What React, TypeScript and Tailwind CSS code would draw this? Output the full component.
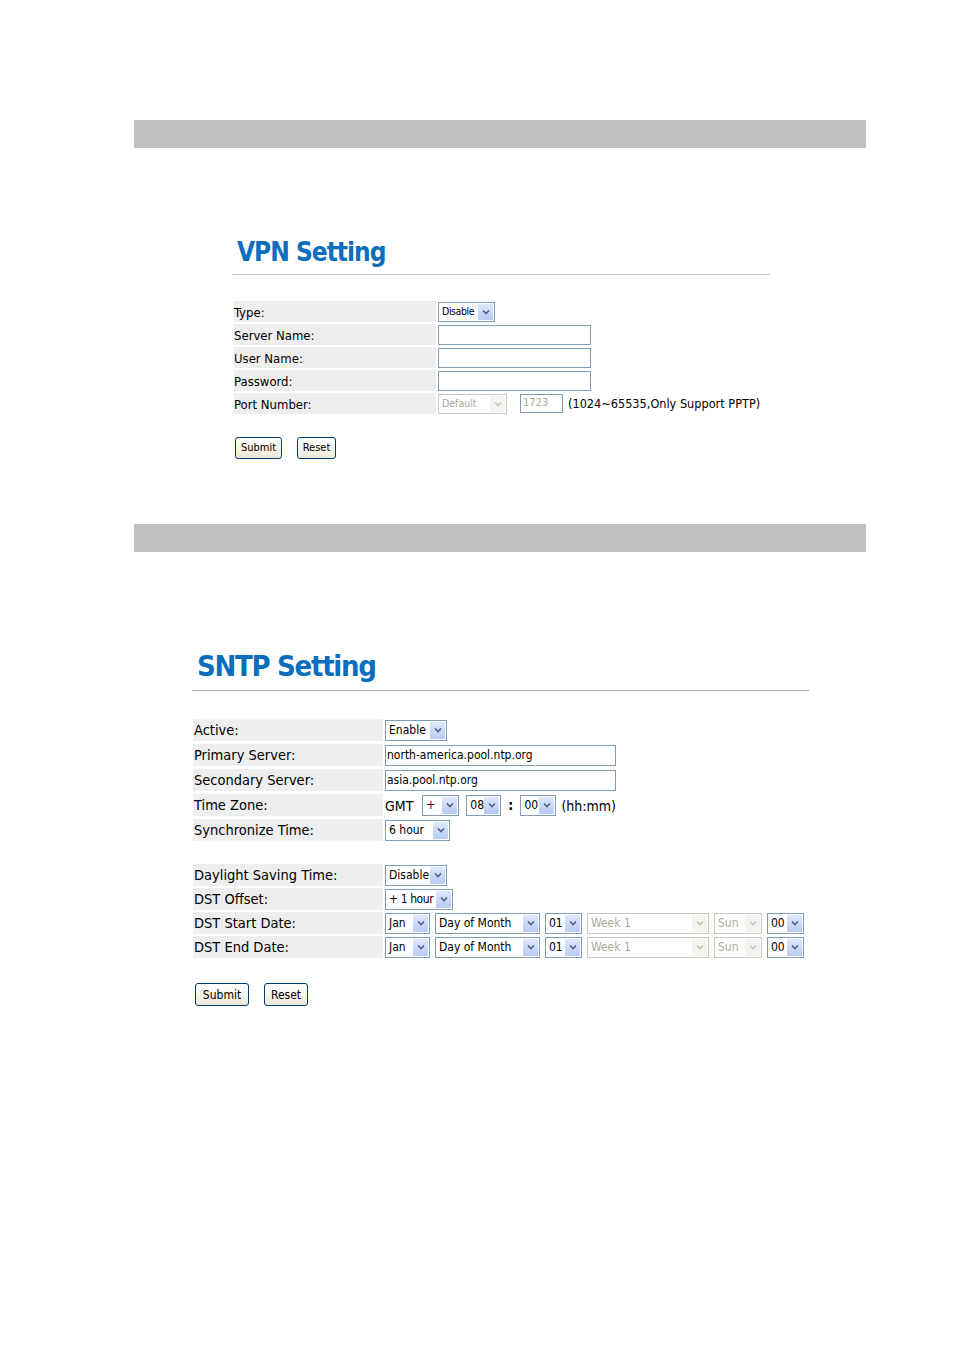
import React from "react";

const FONT = "[font-family:'DejaVu_Sans_Condensed','DejaVu_Sans',sans-serif]";

function Chevron({ disabled }: { disabled?: boolean }) {
  return (
    <svg width="8" height="6" viewBox="0 0 8 6">
      <polyline
        points="1,1.5 4,4.5 7,1.5"
        fill="none"
        stroke={disabled ? "#c9c7ba" : "#4d6185"}
        strokeWidth="1.6"
      />
    </svg>
  );
}

function Sel({
  w,
  h,
  text,
  disabled,
  size,
  tight,
}: {
  w: number;
  h: number;
  text: string;
  disabled?: boolean;
  size: "s" | "m";
  tight?: boolean;
}) {
  return (
    <div
      className={`flex shrink-0 items-stretch border bg-white ${
        disabled ? "border-[#c9c7ba]" : "border-[#7f9db9]"
      }`}
      style={{ width: w, height: h }}
    >
      <div
        className={`flex min-w-0 flex-1 items-center whitespace-nowrap pl-[3px] ${
          size === "s" ? "text-[10.5px]" : "text-[12px]"
        } ${tight ? "tracking-[-0.4px]" : ""} ${disabled ? "text-[#aca899]" : "text-black"}`}
      >
        {text}
      </div>
      <div
        className={`m-px flex w-[15px] shrink-0 items-center justify-center rounded-[1px] ${
          disabled
            ? "bg-[#f4f3ee]"
            : "bg-gradient-to-b from-[#dfe8fc] to-[#b7caf5]"
        }`}
      >
        <Chevron disabled={disabled} />
      </div>
    </div>
  );
}

function Inp({ w, h, text, disabled, small }: { w: number; h: number; text?: string; disabled?: boolean; small?: boolean }) {
  return (
    <div
      className={`flex shrink-0 items-center overflow-hidden whitespace-nowrap border bg-white ${
        disabled ? "border-[#7f9db9] text-[#aca899] pl-[2px]" : "border-[#7f9db9] text-black pl-px"
      } ${small ? "text-[11px]" : "text-[12px]"}`}
      style={{ width: w, height: h }}
    >
      {text}
    </div>
  );
}

function Btn({ w, h, label, size }: { w: number; h: number; label: string; size: string }) {
  return (
    <div
      className={`flex shrink-0 items-center justify-center rounded-[3px] border border-[#003c74] bg-gradient-to-b from-[#ffffff] to-[#ece9d8] text-black ${size}`}
      style={{ width: w, height: h }}
    >
      {label}
    </div>
  );
}

function VRow({ label, children }: { label: string; children?: React.ReactNode }) {
  return (
    <div className="flex h-[21px]">
      <div className="flex w-[202px] items-center bg-[#eeeeee] pt-[2px] text-[13px] text-black">{label}</div>
      <div className="flex flex-1 items-center pl-[2px]">{children}</div>
    </div>
  );
}

function SRow({ label, children }: { label: string; children?: React.ReactNode }) {
  return (
    <div className="flex h-[22px]">
      <div className="flex w-[190px] items-center bg-[#eeeeee] pl-px pt-px text-[14.5px] text-black">{label}</div>
      <div className="flex flex-1 items-center gap-[5px] pl-[2px]">{children}</div>
    </div>
  );
}

export default function App() {
  return (
    <div className={`w-[954px] h-[1350px] bg-white pt-[120px] ${FONT}`}>
      <div className="ml-[134px] h-[28px] w-[732px] bg-[#c0c0c0]" />

      {/* VPN */}
      <div className="ml-[232px] w-[538px]">
        <div className="mt-[87px] flex h-[40px] items-end border-b border-[#c8c5bd] pb-[6px] pl-[5px]">
          <h1 className="text-[26px] font-bold leading-[32px] tracking-[-1px] text-[#0a6ebd]">VPN Setting</h1>
        </div>
        <div className="ml-[2px] mt-[26px] flex flex-col gap-[2px]">
          <VRow label="Type:">
            <Sel w={57} h={20} text="Disable" size="s" tight />
          </VRow>
          <VRow label="Server Name:">
            <Inp w={153} h={20} />
          </VRow>
          <VRow label="User Name:">
            <Inp w={153} h={20} />
          </VRow>
          <VRow label="Password:">
            <Inp w={153} h={20} />
          </VRow>
          <VRow label="Port Number:">
            <Sel w={69} h={20} text="Default" disabled size="s" />
            <div className="ml-[13px]">
              <Inp w={43} h={19} text="1723" disabled small />
            </div>
            <span className="ml-[5px] pt-[2px] text-[12.6px] text-black whitespace-nowrap">(1024~65535,Only Support PPTP)</span>
          </VRow>
        </div>
        <div className="ml-[3px] mt-[23px] flex gap-[15px]">
          <Btn w={47} h={22} label="Submit" size="text-[11px]" />
          <Btn w={39} h={22} label="Reset" size="text-[11px]" />
        </div>
      </div>

      <div className="ml-[134px] mt-[65px] h-[28px] w-[732px] bg-[#c0c0c0]" />

      {/* SNTP */}
      <div className="ml-[192px] w-[617px]">
        <div className="mt-[94px] flex h-[45px] items-end border-b border-[#b3ab9b] pb-[6px] pl-[5px]">
          <h1 className="text-[29px] font-bold leading-[36px] tracking-[-1.3px] text-[#0a6ebd]">SNTP Setting</h1>
        </div>
        <div className="ml-px mt-[28px] flex flex-col gap-[3px]">
          <SRow label="Active:">
            <Sel w={62} h={21} text="Enable" size="m" />
          </SRow>
          <SRow label="Primary Server:">
            <Inp w={231} h={21} text="north-america.pool.ntp.org" />
          </SRow>
          <SRow label="Secondary Server:">
            <Inp w={231} h={21} text="asia.pool.ntp.org" />
          </SRow>
          <SRow label="Time Zone:">
            <span className="mt-[3px] text-[14px] text-black">GMT</span>
            <div className="ml-[4px]">
              <Sel w={37} h={21} text=" +" size="m" />
            </div>
            <div className="ml-[2px]">
              <Sel w={35} h={21} text="08" size="m" />
            </div>
            <span className="mx-[2px] text-[14px] font-bold text-black">:</span>
            <Sel w={36} h={21} text="00" size="m" />
            <span className="mt-[2px] text-[14px] text-black">(hh:mm)</span>
          </SRow>
          <SRow label="Synchronize Time:">
            <Sel w={65} h={21} text="6 hour" size="m" />
          </SRow>
        </div>

        <div className="ml-px mt-[23px] flex flex-col gap-[2px]">
          <SRow label="Daylight Saving Time:">
            <Sel w={62} h={21} text="Disable" size="m" />
          </SRow>
          <SRow label="DST Offset:">
            <Sel w={68} h={21} text="+ 1 hour" size="m" tight />
          </SRow>
          <SRow label="DST Start Date:">
            <Sel w={45} h={21} text="Jan" size="m" />
            <Sel w={105} h={21} text="Day of Month" size="m" />
            <Sel w={37} h={21} text="01" size="m" />
            <Sel w={122} h={21} text="Week 1" disabled size="m" />
            <Sel w={48} h={21} text="Sun" disabled size="m" />
            <Sel w={37} h={21} text="00" size="m" />
          </SRow>
          <SRow label="DST End Date:">
            <Sel w={45} h={21} text="Jan" size="m" />
            <Sel w={105} h={21} text="Day of Month" size="m" />
            <Sel w={37} h={21} text="01" size="m" />
            <Sel w={122} h={21} text="Week 1" disabled size="m" />
            <Sel w={48} h={21} text="Sun" disabled size="m" />
            <Sel w={37} h={21} text="00" size="m" />
          </SRow>
        </div>

        <div className="ml-[3px] mt-[25px] flex gap-[15px]">
          <Btn w={54} h={23} label="Submit" size="text-[12px]" />
          <Btn w={44} h={23} label="Reset" size="text-[12px]" />
        </div>
      </div>
    </div>
  );
}
